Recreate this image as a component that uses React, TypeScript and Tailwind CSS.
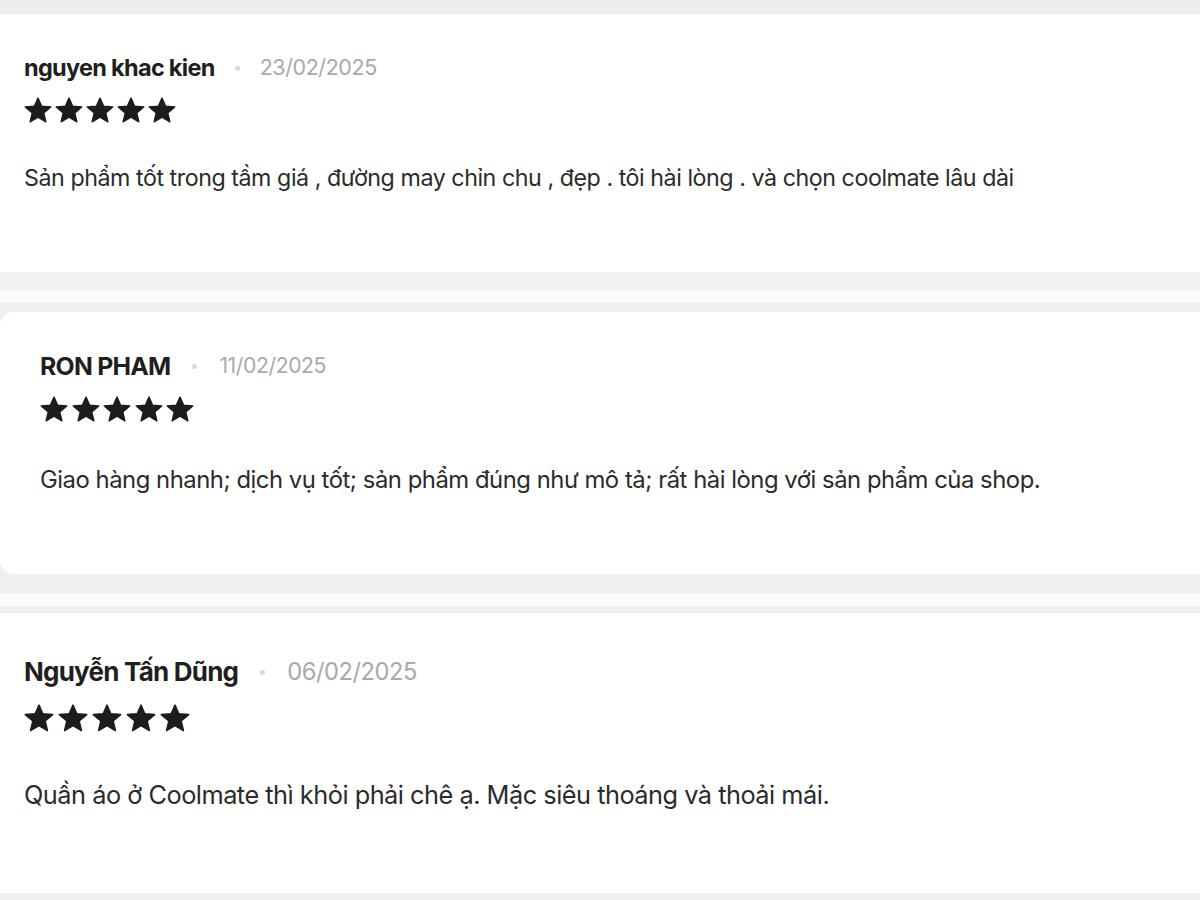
import React from "react";

const Star = ({ size }: { size: number }) => (
  <svg width={size} height={size} viewBox="0 0 24 24" className="block">
    <path
      d="M12 0.9L15.06 7.79L22.94 8.45L16.95 13.61L18.76 21.3L12 17.2L5.24 21.3L7.05 13.61L1.06 8.45L8.94 7.79Z"
      fill="#1c1c1c"
      stroke="#1c1c1c"
      strokeWidth="1.2"
      strokeLinejoin="round"
    />
  </svg>
);

type R = {
  name: string;
  date: string;
  text: string;
  nameSize: number;
  dateSize: number;
  textSize: number;
  star: number;
  starGap: number;
  starTop: number;
  textTop: number;
  dotGap: number;
};

const Review = ({ r }: { r: R }) => (
  <div className="flex flex-col">
    <div className="flex items-center h-[28px]">
      <span
        className="font-bold tracking-[-0.03em] text-[#1f1f1f] leading-none"
        style={{ fontSize: r.nameSize }}
      >
        {r.name}
      </span>
      <span
        className="w-[5px] h-[5px] rounded-full bg-[#d9d9d9]"
        style={{ marginLeft: r.dotGap, marginRight: r.dotGap }}
      />
      <span
        className="tracking-[-0.02em] text-[#a9a9a9] leading-none"
        style={{ fontSize: r.dateSize }}
      >
        {r.date}
      </span>
    </div>
    <div className="flex" style={{ gap: r.starGap, marginTop: r.starTop }}>
      {[0, 1, 2, 3, 4].map((i) => (
        <Star key={i} size={r.star} />
      ))}
    </div>
    <p
      className="tracking-[-0.02em] text-[#2b2b2b] leading-[30px]"
      style={{ fontSize: r.textSize, marginTop: r.textTop }}
    >
      {r.text}
    </p>
  </div>
);

export default function App() {
  return (
    <div
      className="w-[1200px] h-[900px] overflow-hidden bg-[#efefef] flex flex-col"
      style={{ fontFamily: "Inter, 'Noto Sans', sans-serif" }}
    >
      <div className="h-[14px] shrink-0 bg-[#eeeeee] border-b border-[#e8e8e8]" />
      <div className="h-[258px] shrink-0 bg-white px-6 pt-[40px]">
        <Review
          r={{
            name: "nguyen khac kien",
            date: "23/02/2025",
            text: "Sản phẩm tốt trong tầm giá , đường may chỉn chu , đẹp . tôi hài lòng . và chọn coolmate lâu dài",
            nameSize: 23.5,
            dateSize: 21.5,
            textSize: 23.25,
            star: 28,
            starGap: 3,
            starTop: 15,
            textTop: 38,
            dotGap: 20,
          }}
        />
      </div>
      <div className="h-[18px] shrink-0 bg-[#f1f1f1]" />
      <div className="h-[13px] shrink-0 bg-[#fbfbfb]" />
      <div className="h-[9px] shrink-0 bg-[#f0f0f0]" />
      <div className="h-[262px] shrink-0 bg-white rounded-l-[14px] pl-10 pt-[40px]">
        <Review
          r={{
            name: "RON PHAM",
            date: "11/02/2025",
            text: "Giao hàng nhanh; dịch vụ tốt; sản phẩm đúng như mô tả; rất hài lòng với sản phẩm của shop.",
            nameSize: 24.8,
            dateSize: 21.2,
            textSize: 23.85,
            star: 28,
            starGap: 3.5,
            starTop: 16,
            textTop: 41,
            dotGap: 22,
          }}
        />
      </div>
      <div className="h-[19px] shrink-0 bg-[#f0f0f0]" />
      <div className="h-[13px] shrink-0 bg-[#fbfbfb]" />
      <div className="h-[7px] shrink-0 bg-[#efefef]" />
      <div className="h-[280px] shrink-0 bg-white px-6 pt-[45px]">
        <Review
          r={{
            name: "Nguyễn Tấn Dũng",
            date: "06/02/2025",
            text: "Quần áo ở Coolmate thì khỏi phải chê ạ. Mặc siêu thoáng và thoải mái.",
            nameSize: 26,
            dateSize: 23.7,
            textSize: 25.35,
            star: 30,
            starGap: 4,
            starTop: 18,
            textTop: 46,
            dotGap: 22,
          }}
        />
      </div>
      <div className="flex-1 bg-[#f0f0f0]" />
    </div>
  );
}
